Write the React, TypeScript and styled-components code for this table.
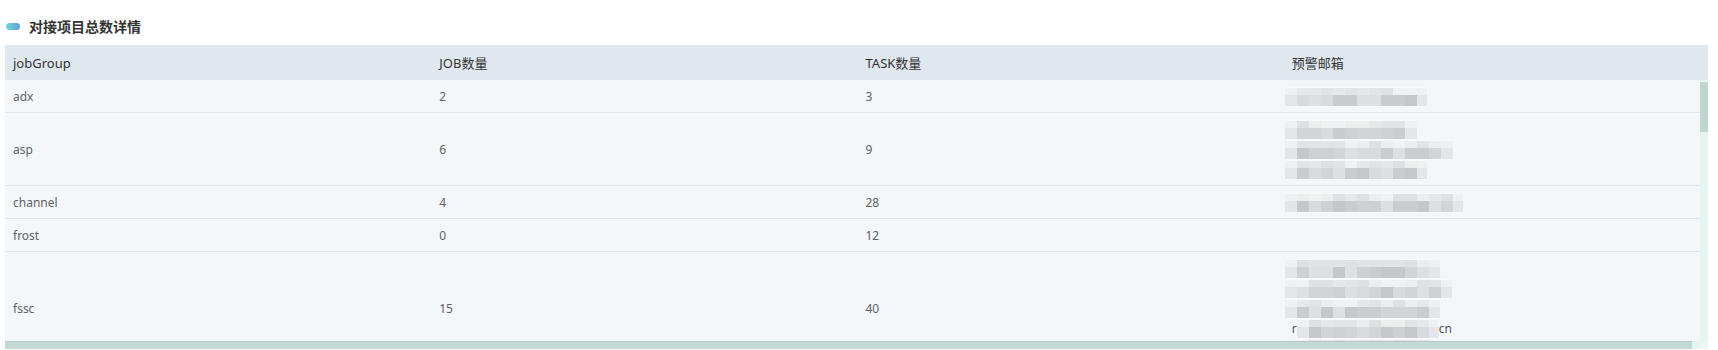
import React from "react";
import styled, { createGlobalStyle } from "styled-components";

const GlobalStyle = createGlobalStyle`
  html, body { margin: 0; padding: 0; background: #ffffff; }
  body {
    font-family: "Noto Sans", "Noto Sans CJK SC", "Liberation Sans", sans-serif;
    color: #333;
  }
  * { box-sizing: border-box; }
`;

const Page = styled.div`
  padding: 16px 0 0 5px;
  width: 1718px;
`;

const TitleRow = styled.div`
  display: flex;
  align-items: center;
  gap: 9px;
  height: 20px;
  margin-bottom: 9px;
  padding-left: 1px;
`;

const TitlePill = styled.span`
  width: 14px;
  height: 7px;
  border-radius: 4px;
  background: linear-gradient(90deg, #74d6d2 0%, #5aa2d8 100%);
`;

const TitleText = styled.h2`
  margin: 0;
  font-size: 14px;
  line-height: 20px;
  font-weight: 700;
  color: #333;
  font-family: "Noto Sans CJK SC", "Noto Sans", sans-serif;
`;

const Table = styled.div`
  width: 1703px;
  overflow: hidden;
`;

const COLS = "repeat(4, 426.25px)";

const HeadRow = styled.div`
  display: grid;
  grid-template-columns: ${COLS};
  height: 35px;
  background: #e0e8ef;
`;

const HeadCell = styled.div`
  display: flex;
  align-items: center;
  padding: 0 8px;
  font-size: 13px;
  color: #333;
`;

const BodyFrame = styled.div`
  display: grid;
  grid-template-columns: 1695px 8px;
  grid-template-rows: 261px 8px;
  height: 269px;
  background: #f3f7fa;
`;

const Viewport = styled.div`
  overflow: hidden;
`;

const BodyInner = styled.div`
  width: 1705px;
`;

const VTrack = styled.div`
  background: #e4f5f2;
  padding-top: 2px;
`;

const VThumb = styled.div`
  height: 50px;
  background: #bed5d0;
`;

const HTrack = styled.div`
  display: flex;
  background: #e4f5f2;
`;

const HThumb = styled.div`
  width: 1687px;
  height: 8px;
  background: #c3d9d5;
  border-top: 1px solid #b4ccc7;
`;

const Corner = styled.div`
  background: #eef6f5;
`;

const Row = styled.div`
  display: grid;
  grid-template-columns: ${COLS};
  background: #f3f7fa;
  border-bottom: 1px solid #dde6ec;
`;

const Cell = styled.div`
  display: flex;
  align-items: center;
  padding: 7px 8px 5px;
  min-height: 32px;
  font-size: 12px;
  line-height: 20px;
  color: #606266;
`;

const EmailList = styled.div`
  display: flex;
  flex-direction: column;
`;

const EmailLine = styled.div<{ $offset: number }>`
  display: flex;
  align-items: center;
  height: 20px;
  margin-left: ${(p) => p.$offset}px;
  font-size: 12px;
  color: #555;
`;

const Peek = styled.span`
  line-height: 20px;
`;

const MosaicSvg = styled.svg`
  display: block;
  flex: none;
`;

function rand(seed: number) {
  let t = seed + 0x6d2b79f5;
  return () => {
    t = (t + 0x6d2b79f5) | 0;
    let r = Math.imul(t ^ (t >>> 15), 1 | t);
    r = (r + Math.imul(r ^ (r >>> 7), 61 | r)) ^ r;
    return ((r ^ (r >>> 14)) >>> 0) / 4294967296;
  };
}

const TOP = ["#e6e7e9", "#eceded", "#e2e3e6", "#f0f1f2", "#dfe0e3"];
const BOT = ["#d3d4d7", "#cbccd0", "#d9dadd", "#c6c7cb", "#dedfe2", "#cfd0d4"];

function Mosaic({ width, seed }: { width: number; seed: number }) {
  const r = rand(seed);
  const cell = 12;
  const n = Math.ceil(width / cell);
  const cells: React.ReactNode[] = [];
  for (let i = 0; i < n; i++) {
    const x = i * cell;
    const w = Math.min(cell, width - x);
    const fade = i === 0 || i === n - 1;
    cells.push(
      <rect key={"t" + i} x={x} y={1} width={w} height={7} fill={fade ? "#eef0f1" : TOP[Math.floor(r() * TOP.length)]} />
    );
    cells.push(
      <rect key={"b" + i} x={x} y={8} width={w} height={11} fill={fade ? "#e4e5e8" : BOT[Math.floor(r() * BOT.length)]} />
    );
  }
  return (
    <MosaicSvg width={width} height={20} viewBox={`0 0 ${width} 20`}>
      <rect x={0} y={0} width={width} height={20} rx={4} fill="#f7f9fa" />
      {cells}
    </MosaicSvg>
  );
}

type Line = { w: number; lead?: string; tail?: string };
type Item = { group: string; job: number; task: number; emails: Line[] };

const items: Item[] = [
  { group: "adx", job: 2, task: 3, emails: [{ w: 142 }] },
  { group: "asp", job: 6, task: 9, emails: [{ w: 132 }, { w: 168 }, { w: 142 }] },
  { group: "channel", job: 4, task: 28, emails: [{ w: 178 }] },
  { group: "frost", job: 0, task: 12, emails: [] },
  {
    group: "fssc",
    job: 15,
    task: 40,
    emails: [{ w: 155 }, { w: 167 }, { w: 155 }, { w: 142, lead: "r", tail: "cn" }, { w: 150 }],
  },
];

export default function App() {
  return (
    <>
      <GlobalStyle />
      <Page>
        <TitleRow>
          <TitlePill />
          <TitleText>对接项目总数详情</TitleText>
        </TitleRow>
        <Table>
          <HeadRow>
            <HeadCell>jobGroup</HeadCell>
            <HeadCell>JOB数量</HeadCell>
            <HeadCell>TASK数量</HeadCell>
            <HeadCell>预警邮箱</HeadCell>
          </HeadRow>
          <BodyFrame>
            <Viewport>
              <BodyInner>
                {items.map((it, ri) => (
                  <Row key={it.group}>
                    <Cell>{it.group}</Cell>
                    <Cell>{it.job}</Cell>
                    <Cell>{it.task}</Cell>
                    <Cell>
                      <EmailList>
                        {it.emails.map((l, li) => (
                          <EmailLine key={li} $offset={l.lead ? 0 : -7}>
                            {l.lead && <Peek>{l.lead}</Peek>}
                            <Mosaic width={l.w} seed={ri * 31 + li * 7 + 3} />
                            {l.tail && <Peek>{l.tail}</Peek>}
                          </EmailLine>
                        ))}
                      </EmailList>
                    </Cell>
                  </Row>
                ))}
              </BodyInner>
            </Viewport>
            <VTrack>
              <VThumb />
            </VTrack>
            <HTrack>
              <HThumb />
            </HTrack>
            <Corner />
          </BodyFrame>
        </Table>
      </Page>
    </>
  );
}
